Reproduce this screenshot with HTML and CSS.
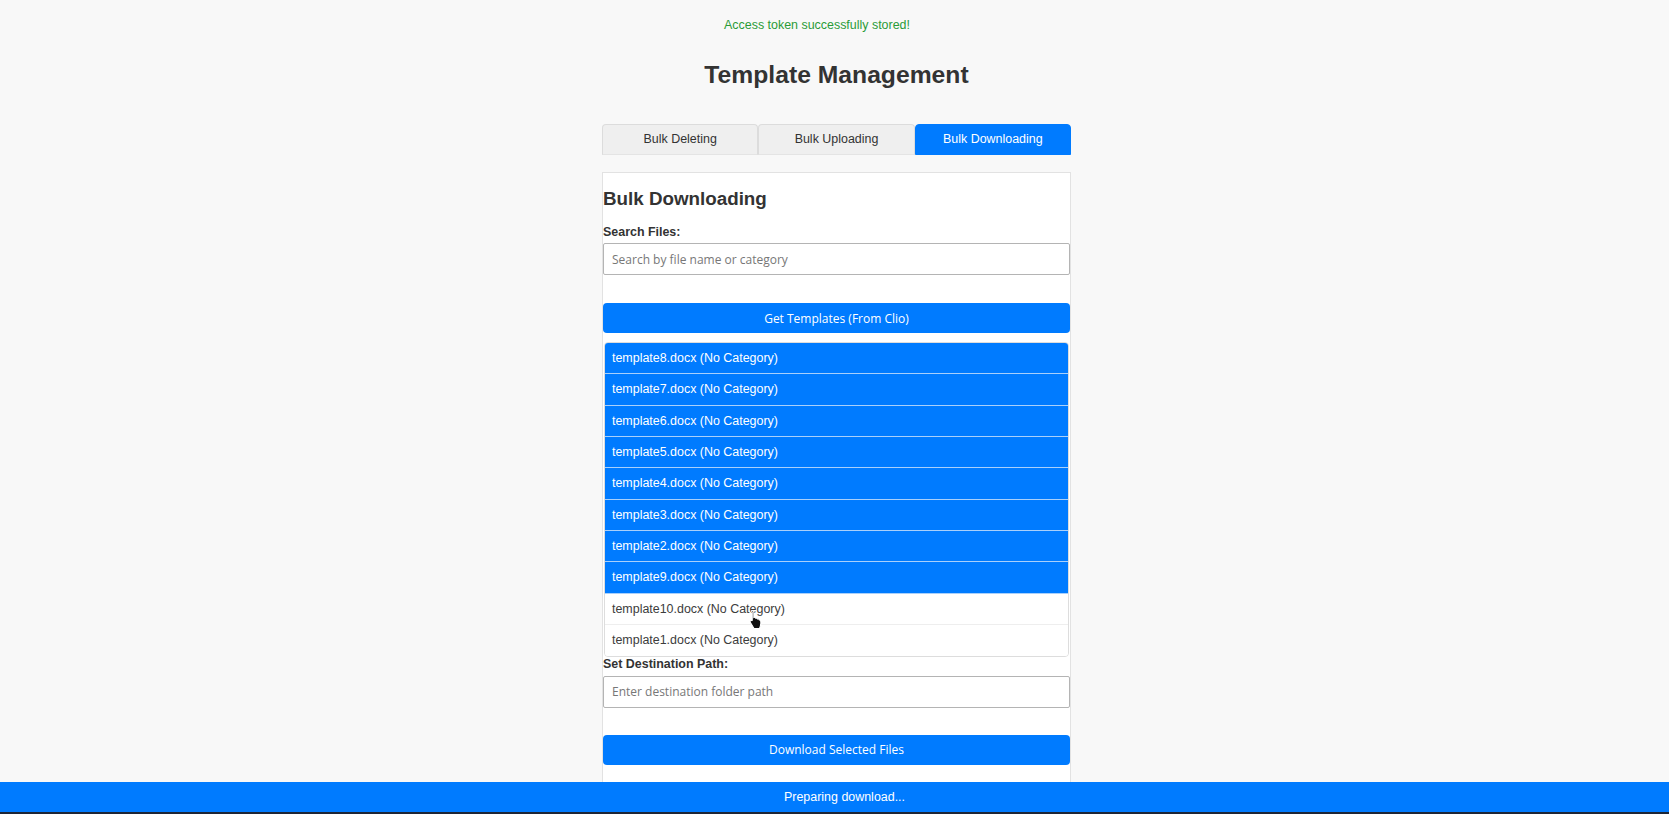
FILE: index.html
```html
<!DOCTYPE html>
<html lang="en">
<head>
<meta charset="utf-8">
<title>Template Management</title>
<link rel="stylesheet" href="styles.css">
</head>
<body>
<div class="page">
  <p class="status-msg">Access token successfully stored!</p>
  <h1 class="title">Template Management</h1>
  <div class="container">
    <div class="tabs">
      <button class="tab">Bulk Deleting</button>
      <button class="tab">Bulk Uploading</button>
      <button class="tab tab-active">Bulk Downloading</button>
    </div>
    <div class="card">
      <h2 class="card-title">Bulk Downloading</h2>
      <label class="field-label" for="search">Search Files:</label>
      <input class="text-input" id="search" type="text" placeholder="Search by file name or category">
      <button class="primary-btn">Get Templates (From Clio)</button>
      <ul class="file-list">
        <li class="file-item selected">template8.docx (No Category)</li>
        <li class="file-item selected">template7.docx (No Category)</li>
        <li class="file-item selected">template6.docx (No Category)</li>
        <li class="file-item selected">template5.docx (No Category)</li>
        <li class="file-item selected">template4.docx (No Category)</li>
        <li class="file-item selected">template3.docx (No Category)</li>
        <li class="file-item selected">template2.docx (No Category)</li>
        <li class="file-item selected">template9.docx (No Category)</li>
        <li class="file-item">template10.docx (No Category)</li>
        <li class="file-item">template1.docx (No Category)</li>
      </ul>
      <label class="field-label field-label-tight" for="dest">Set Destination Path:</label>
      <input class="text-input text-input-tight" id="dest" type="text" placeholder="Enter destination folder path">
      <button class="primary-btn primary-btn-lg">Download Selected Files</button>
    </div>
  </div>
</div>
<svg class="cursor" width="17" height="21" viewBox="0 0 16 20" aria-hidden="true">
  <path d="M5 1.5c.8 0 1.4.6 1.4 1.4v5.2l.3-.1c.7-.2 1.4.2 1.6.8.6-.3 1.4 0 1.6.7.6-.3 1.4 0 1.6.7l.1.3c.6-.1 1.2.3 1.3.9.4 1.6.3 3.4-.3 5l-.8 2.1H6.6L3.2 13c-.5-.6-.4-1.5.2-1.9.5-.4 1.2-.3 1.6.1l-.1-.1V2.9C3.6 2.1 4.2 1.5 5 1.5z" fill="#111" stroke="#fff" stroke-width="1"/>
</svg>
<div class="toast">Preparing download...</div>
<div class="taskbar"></div>
</body>
</html>
```

FILE: styles.css
```css
html, body {
  margin: 0;
  padding: 0;
  height: 100%;
  overflow: hidden;
}

body {
  background: #f8f8f8;
  font-family: "Liberation Sans", Arial, sans-serif;
  font-size: 12.44px;
  color: #333;
}

.page {
  padding: 18px 0 0 4px;
}

.status-msg {
  margin: 0;
  padding-right: 39px;
  text-align: center;
  color: #2a9b37;
  font-size: 12.44px;
  line-height: 14.3px;
}

.title {
  margin: 29px 0 0;
  text-align: center;
  font-size: 24.7px;
  line-height: 28.4px;
  font-weight: bold;
  color: #333;
}

.container {
  width: 469px;
  margin: 34px auto 0;
}

.tabs {
  display: flex;
  height: 31px;
}

.tab {
  flex: 1;
  margin: 0;
  padding: 0;
  background: #efefef;
  border: 1px solid #dcdcdc;
  border-bottom-color: #e4e4e4;
  border-radius: 4px 4px 0 0;
  font-family: "Liberation Sans", Arial, sans-serif;
  font-size: 12.44px;
  color: #333;
  cursor: pointer;
}

.tab-active {
  background: #007bff;
  border-color: #007bff;
  color: #fff;
}

.card {
  margin-top: 17px;
  background: #fff;
  border: 1px solid #e2e2e2;
  border-bottom: none;
  min-height: 700px;
}

.card-title {
  margin: 15.5px 0 15.5px;
  font-size: 18.8px;
  line-height: 21.4px;
  font-weight: bold;
  color: #333;
}

.field-label {
  display: block;
  margin-bottom: 4px;
  font-weight: bold;
  font-size: 12.44px;
  line-height: 14.3px;
  color: #333;
}

.field-label-tight {
  margin-top: 0;
  margin-bottom: 4px;
}

.text-input {
  display: block;
  box-sizing: border-box;
  width: 100%;
  height: 32px;
  margin: 0 0 28px;
  padding: 0 8px;
  border: 1px solid #b4b4b4;
  border-radius: 2px;
  background: #fff;
  font-family: "Open Sans", "Noto Sans", sans-serif;
  font-size: 12px;
  color: #333;
}

.text-input-tight {
  margin-bottom: 27px;
}

.text-input::placeholder {
  color: #777;
}

.primary-btn {
  display: block;
  width: 100%;
  height: 29.5px;
  margin: 0;
  padding: 0;
  border: none;
  border-radius: 4px;
  background: #007bff;
  color: #fff;
  font-family: "Open Sans", "Noto Sans", sans-serif;
  font-size: 12px;
  cursor: pointer;
}

.primary-btn-lg {
  height: 30.4px;
}

.file-list {
  list-style: none;
  margin: 9px 1px 0;
  padding: 0;
  border: 1px solid #ddd;
  border-radius: 4px;
  overflow: hidden;
}

.file-item {
  box-sizing: border-box;
  height: 31.35px;
  padding: 0 7px;
  line-height: 30px;
  border-bottom: 1px solid #eee;
  background: #fff;
  color: #3c3c3c;
  font-size: 12.44px;
}

.file-item:last-child {
  border-bottom: none;
}

.file-item.selected {
  background: #007bff;
  color: #fff;
  border-bottom-color: #a9d0fb;
}

.cursor {
  position: absolute;
  left: 747px;
  top: 609px;
}

.toast {
  position: fixed;
  left: 0;
  right: 0;
  bottom: 2px;
  height: 30px;
  box-sizing: border-box;
  padding-left: 20px;
  background: #007bff;
  color: #fff;
  text-align: center;
  line-height: 30px;
  font-size: 12.44px;
}

.taskbar {
  position: fixed;
  left: 0;
  right: 0;
  bottom: 0;
  height: 2px;
  background: #1e2636;
}
```
